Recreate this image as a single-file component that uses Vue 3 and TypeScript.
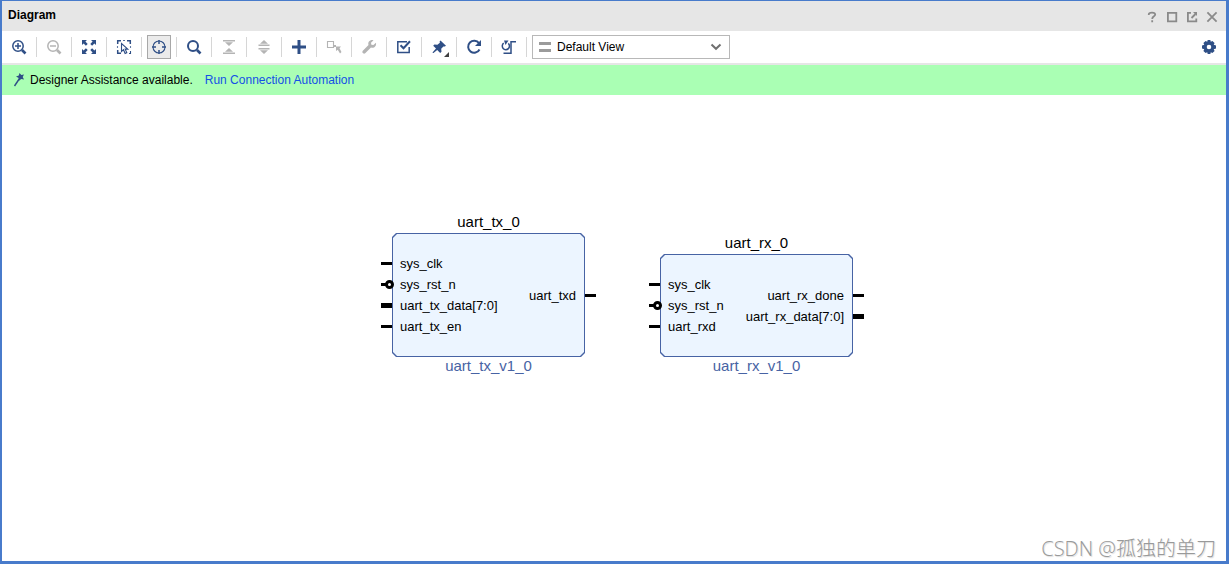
<script setup lang="ts">
import { ref } from 'vue'

interface Tool {
  id: string
  label: string
  disabled?: boolean
  pressed?: boolean
}

interface Port {
  name: string
  kind: 'wire' | 'bus' | 'inverted'
}

interface Block {
  id: string
  title: string
  version: string
  place: string
  inputs: Port[]
  outputs: Port[]
}

const tools: Tool[] = [
  { id: 'zoom-in', label: 'Zoom In' },
  { id: 'zoom-out', label: 'Zoom Out', disabled: true },
  { id: 'fit', label: 'Zoom Fit' },
  { id: 'select-area', label: 'Select Area' },
  { id: 'target', label: 'Autofit Selection', pressed: true },
  { id: 'search', label: 'Search' },
  { id: 'collapse', label: 'Collapse All', disabled: true },
  { id: 'expand', label: 'Expand All', disabled: true },
  { id: 'add', label: 'Add IP' },
  { id: 'connect', label: 'Make Connection', disabled: true },
  { id: 'wrench', label: 'Customize Block', disabled: true },
  { id: 'validate', label: 'Validate Design' },
  { id: 'pin', label: 'Pin Blocks' },
  { id: 'refresh', label: 'Regenerate Layout' },
  { id: 'optimize', label: 'Optimize Routing' },
]

const blocks: Block[] = [
  {
    id: 'tx',
    title: 'uart_tx_0',
    version: 'uart_tx_v1_0',
    place: 'at-tx',
    inputs: [
      { name: 'sys_clk', kind: 'wire' },
      { name: 'sys_rst_n', kind: 'inverted' },
      { name: 'uart_tx_data[7:0]', kind: 'bus' },
      { name: 'uart_tx_en', kind: 'wire' },
    ],
    outputs: [{ name: 'uart_txd', kind: 'wire' }],
  },
  {
    id: 'rx',
    title: 'uart_rx_0',
    version: 'uart_rx_v1_0',
    place: 'at-rx',
    inputs: [
      { name: 'sys_clk', kind: 'wire' },
      { name: 'sys_rst_n', kind: 'inverted' },
      { name: 'uart_rxd', kind: 'wire' },
    ],
    outputs: [
      { name: 'uart_rx_done', kind: 'wire' },
      { name: 'uart_rx_data[7:0]', kind: 'bus' },
    ],
  },
]

const view = ref('Default View')
</script>

<template>
  <main class="window">
    <header class="titlebar">
      <h1 class="title">Diagram</h1>
      <div class="window-actions">
        <button type="button" aria-label="Help">
          <svg viewBox="0 0 12 12"><path d="M2.8 4V3.2C2.8 1.9 4 1.6 6 1.6S9.2 2.2 9.2 3.6C9.2 5.4 6.2 5.2 6.2 8M6.2 9.3v2" /></svg>
        </button>
        <button type="button" aria-label="Maximize">
          <svg viewBox="0 0 12 12"><path d="M1.9 1.9h8.4v8.4H1.9z" /></svg>
        </button>
        <button type="button" aria-label="Float">
          <svg viewBox="0 0 12 12"><path d="M5 1.9H1.9v8.4h8.4V7.5M5.5 7l4-4" /><path class="solid" d="M7 1h4v4z" /></svg>
        </button>
        <button type="button" aria-label="Close">
          <svg viewBox="0 0 12 12"><path d="M1.4 1.4l9.2 9.2M10.6 1.4l-9.2 9.2" /></svg>
        </button>
      </div>
    </header>

    <div class="toolbar" role="toolbar" aria-label="Diagram tools">
      <div v-for="tool in tools" :key="tool.id" class="cell">
        <button
          type="button"
          class="tool"
          :class="{ pressed: tool.pressed }"
          :disabled="tool.disabled"
          :aria-label="tool.label"
        >
          <svg viewBox="0 0 20 20">
            <template v-if="tool.id === 'zoom-in'">
              <circle class="line" cx="9" cy="9" r="5.2" />
              <path class="line" d="M9 6v6M6 9h6" />
              <path class="thick" d="M13 13l3.500 3.500" />
            </template>
            <template v-else-if="tool.id === 'zoom-out'">
              <circle class="line" cx="9" cy="9" r="5.2" />
              <path class="line" d="M6 9h6" />
              <path class="thick" d="M13 13l3.500 3.500" />
            </template>
            <template v-else-if="tool.id === 'fit'">
              <path d="M3 3h5L6.400 4.600 8.700 6.900 6.900 8.700 4.600 6.400 3 8zM17 3v5l-1.600-1.600-2.300 2.300-1.800-1.800 2.300-2.300L12 3zM3 17v-5l1.600 1.600 2.300-2.300 1.800 1.800-2.300 2.300L8 17zM17 17h-5l1.600-1.600-2.300-2.300 1.800-1.800 2.300 2.300L17 12z" />
            </template>
            <template v-else-if="tool.id === 'select-area'">
              <path class="line" d="M3.700 7V3.700H7M13 3.700h3.300V7M3.700 13v3.300H7" />
              <path class="thin" d="M9.200 3.500h1.600M16.500 9.200v1.600M3.500 9.200v1.600M16.500 14v2.500H15" />
              <path class="thin" d="M7.500 6.500v8l2-1.800 1.600 3.800 1.700-.8-1.600-3.600h2.600z" />
            </template>
            <template v-else-if="tool.id === 'target'">
              <circle class="thin" cx="10" cy="10" r="6" />
              <path class="line" d="M10 3v4M10 13v4M3 10h4M13 10h4" />
            </template>
            <template v-else-if="tool.id === 'search'">
              <circle class="medium" cx="9" cy="9" r="5" />
              <path class="thick" d="M13 13l3.500 3.500" />
            </template>
            <template v-else-if="tool.id === 'collapse'">
              <path d="M4 3h12v1.500H4zM6 5.200h8L10 9zM4 15.500h12V17H4zM6 14.800h8L10 11z" />
            </template>
            <template v-else-if="tool.id === 'expand'">
              <path d="M6 6.800h8L10 3zM4.500 7.500h11V9h-11zM4.500 11h11v1.500h-11zM6 13.200h8L10 17z" />
            </template>
            <template v-else-if="tool.id === 'add'">
              <path d="M8.500 3h3v5.500H17v3h-5.500V17h-3v-5.500H3v-3h5.500z" />
            </template>
            <template v-else-if="tool.id === 'connect'">
              <path class="thin" d="M3.500 4.500h6v6h-6z" />
              <path d="M10 8h2v2h-2zM12 9.500h5l-1.500 1.700L17.500 15l-1.500 1.500-2.200-3.800L12 14z" />
            </template>
            <template v-else-if="tool.id === 'wrench'">
              <path d="M14.500 3.200L12 5.700l.4 2 2 .4L17 5.700c.6 3.500-2 5.800-5 4.800L6.200 16.200c-1.500 1.500-3.900-.8-2.400-2.400L9.500 8c-1-3 1.500-5.700 5-4.800z" />
            </template>
            <template v-else-if="tool.id === 'validate'">
              <path class="line" d="M13 4.800H3.800v10.700h11.400V10" />
              <path class="medium" d="M6.500 8.200l3 3 6.500-7" />
            </template>
            <template v-else-if="tool.id === 'pin'">
              <path d="M11.500 3.500l5.500 5.300-1.200.8-1.400-.2-2.200 2.400.3 3-1.300 1.200-3-3L4.500 16H3.700v-.8L7 11.500 4.200 8.700l1.200-1.100 3 .2 2.500-2-.3-1.300z" />
              <path class="menu-mark" d="M20 15v5h-5z" />
            </template>
            <template v-else-if="tool.id === 'refresh'">
              <path class="medium" d="M15 6.200A6 6 0 1 0 15.500 12.500" />
              <path d="M17 3v6h-6z" />
            </template>
            <template v-else>
              <path class="line" d="M4.700 6.200A3.600 3.600 0 1 0 9.300 6.400" />
              <path d="M5 3.500h4.500L6.500 8z" />
              <path class="line" d="M4.500 16.200H12V4.800h5" />
            </template>
          </svg>
        </button>
      </div>

      <label class="view-picker">
        <svg class="view-icon" viewBox="0 0 12 10"><path d="M0 0h12v3H0zM0 7h12v3H0z" /></svg>
        <select v-model="view" aria-label="View">
          <option>Default View</option>
        </select>
        <svg class="chevron" viewBox="0 0 12 8"><path d="M1.500 1.500L6 5.800l4.500-4.300" /></svg>
      </label>

      <button type="button" class="tool settings" aria-label="Settings">
        <svg viewBox="0 0 20 20">
          <path
            fill-rule="evenodd"
            d="M8.700 3h2.600l.5 1.800 1.600-.9 2.200 2.200-.9 1.600 2.300.7v3.200l-2.300.7.900 1.600-2.200 2.200-1.600-.9-.5 1.800H8.700l-.5-1.800-1.600.9-2.200-2.200.9-1.600-2.300-.7V8.400l2.300-.7-.9-1.600 2.200-2.200 1.600.9zM10 7.700a2.300 2.300 0 1 0 0 4.600 2.300 2.300 0 0 0 0-4.600z"
          />
        </svg>
      </button>
    </div>

    <div class="assistance">
      <svg class="wand" viewBox="0 0 12 16">
        <path d="M6.500 1l1.800 2L11 2.500 9.700 5 11 7.500 8.200 7 6 8.800 5.700 6 3 4.500l2.800-1z" />
        <path class="handle" d="M6.500 6.500L1.500 14" />
      </svg>
      <span>Designer Assistance available.</span>
      <a href="#">Run Connection Automation</a>
    </div>

    <section class="canvas" aria-label="Block design">
      <article v-for="block in blocks" :key="block.id" class="block" :class="block.place">
        <h2 class="block-title">{{ block.title }}</h2>
        <div class="body">
          <ul class="ports inputs">
            <li v-for="port in block.inputs" :key="port.name" :class="port.kind">{{ port.name }}</li>
          </ul>
          <ul class="ports outputs">
            <li v-for="port in block.outputs" :key="port.name" :class="port.kind">{{ port.name }}</li>
          </ul>
        </div>
        <p class="version">{{ block.version }}</p>
      </article>
      <p class="watermark">CSDN @孤独的单刀</p>
    </section>
  </main>
</template>

<style>
html,
body,
#app {
  height: 100%;
}
body {
  background: #fff;
}
</style>

<style scoped>
*,
*::before,
*::after {
  box-sizing: border-box;
}
.window {
  display: flex;
  flex-direction: column;
  height: calc(100% - 3px);
  border: solid #487bcb;
  border-width: 1px 3px 3px 2px;
  background: #fff;
  color: #000;
  font: 12px/16px "Liberation Sans", Arial, sans-serif;
}
button {
  padding: 0;
  border: 0;
  background: none;
}
svg {
  display: block;
}
.titlebar {
  display: flex;
  justify-content: space-between;
  height: 30px;
  padding: 0 8px 0 6px;
  background: #e6e6e6;
}
.title {
  margin: 0;
  padding-top: 6px;
  font-size: 12px;
  line-height: 16px;
}
.window-actions {
  display: flex;
  align-items: center;
  gap: 8px;
  padding-top: 2px;
}
.window-actions svg {
  width: 12px;
  height: 12px;
  fill: none;
  stroke: #8a8a8a;
  stroke-width: 1.8;
}
.window-actions .solid {
  fill: #8a8a8a;
  stroke: none;
}
.toolbar {
  display: flex;
  align-items: center;
  height: 34px;
  border-bottom: 2px solid #e6e6e6;
}
.cell {
  display: flex;
  align-items: center;
  justify-content: center;
  width: 35px;
  height: 20px;
  border-right: 1px solid #d6d6d6;
}
.tool {
  display: flex;
  flex: none;
  align-items: center;
  justify-content: center;
  width: 24px;
  height: 24px;
  color: #2f4f86;
}
.tool:disabled {
  color: #b4b4b4;
}
.tool.pressed {
  border: 1px solid #a8a8a8;
  background: #ebebeb;
}
.tool svg {
  flex: none;
  width: 20px;
  height: 20px;
  overflow: visible;
  fill: currentColor;
}
.tool .line,
.tool .thin,
.tool .medium,
.tool .thick {
  fill: none;
  stroke: currentColor;
}
.tool .line {
  stroke-width: 1.5;
}
.tool .thin {
  stroke-width: 1.1;
}
.tool .medium {
  stroke-width: 2;
}
.tool .thick {
  stroke-width: 2.6;
}
.tool .menu-mark {
  fill: #404040;
}
.view-picker {
  display: grid;
  grid-template-columns: 24px 1fr 24px;
  align-items: center;
  width: 198px;
  height: 24px;
  margin-left: 5px;
  border: 1px solid #b8b8b8;
}
.view-picker > * {
  grid-row: 1;
}
.view-picker select {
  grid-column: 1 / -1;
  width: 100%;
  height: 22px;
  padding: 0 24px;
  border: 0;
  background: none;
  color: #000;
  font: inherit;
  appearance: none;
}
.view-icon {
  grid-column: 1;
  width: 12px;
  height: 10px;
  margin-left: 6px;
  fill: #9b9b9b;
}
.chevron {
  grid-column: 3;
  width: 12px;
  height: 8px;
  margin-left: 5px;
  fill: none;
  stroke: #707070;
  stroke-width: 2;
}
.settings {
  margin-left: auto;
  margin-right: 5px;
}
.assistance {
  display: flex;
  align-items: center;
  height: 30px;
  padding-left: 11px;
  background: #aaffb4;
}
.wand {
  width: 12px;
  height: 16px;
  margin-right: 5px;
  fill: #2f4f86;
}
.wand .handle {
  fill: none;
  stroke: #2f4f86;
  stroke-width: 1.4;
}
.assistance a {
  margin-left: 12px;
  color: #1450e6;
  text-decoration: none;
}
.canvas {
  position: relative;
  flex: 1;
  overflow: hidden;
}
.block {
  position: absolute;
  width: 193px;
  text-align: center;
}
.at-tx {
  left: 390px;
  top: 117px;
}
.at-rx {
  left: 658px;
  top: 138px;
}
.block-title,
.version {
  margin: 0;
  font-size: 15px;
  font-weight: 400;
  line-height: 20px;
}
.block-title {
  padding-bottom: 1px;
}
.version {
  color: #4763a4;
  line-height: 18px;
}
.body {
  position: relative;
  display: flex;
  align-items: center;
  justify-content: space-between;
  padding: 20px 9px 20px 8px;
  font-size: 13px;
  line-height: 21px;
}
.body::before,
.body::after {
  content: "";
  position: absolute;
  inset: 0;
  background: #4763a4;
  clip-path: polygon(4px 0, calc(100% - 4px) 0, 100% 4px, 100% calc(100% - 4px), calc(100% - 4px) 100%, 4px 100%, 0 calc(100% - 4px), 0 4px);
}
.body::after {
  inset: 1px;
  background: #ecf5ff;
}
.ports {
  z-index: 1;
  margin: 0;
  padding: 0;
  list-style: none;
}
.ports li {
  position: relative;
}
.inputs {
  text-align: left;
}
.outputs {
  text-align: right;
}
.ports li::before {
  content: "";
  position: absolute;
  top: 9px;
  width: 11px;
  height: 3px;
  background: #000;
}
.inputs li::before {
  left: -19px;
}
.outputs li::before {
  right: -20px;
}
.ports .bus::before {
  top: 8px;
  height: 5px;
}
.ports .inverted::before {
  width: 6px;
}
.inverted::after {
  content: "";
  position: absolute;
  left: -15px;
  top: 6px;
  width: 9px;
  height: 9px;
  border: 3px solid #000;
  border-radius: 50%;
  background: #fff;
}
.watermark {
  position: absolute;
  right: 10px;
  bottom: 0;
  margin: 0;
  color: #999;
  font: 300 20px/24px "Open Sans", "Noto Sans CJK SC", sans-serif;
  text-shadow: 1px 1px 1px #ddd;
}
</style>
